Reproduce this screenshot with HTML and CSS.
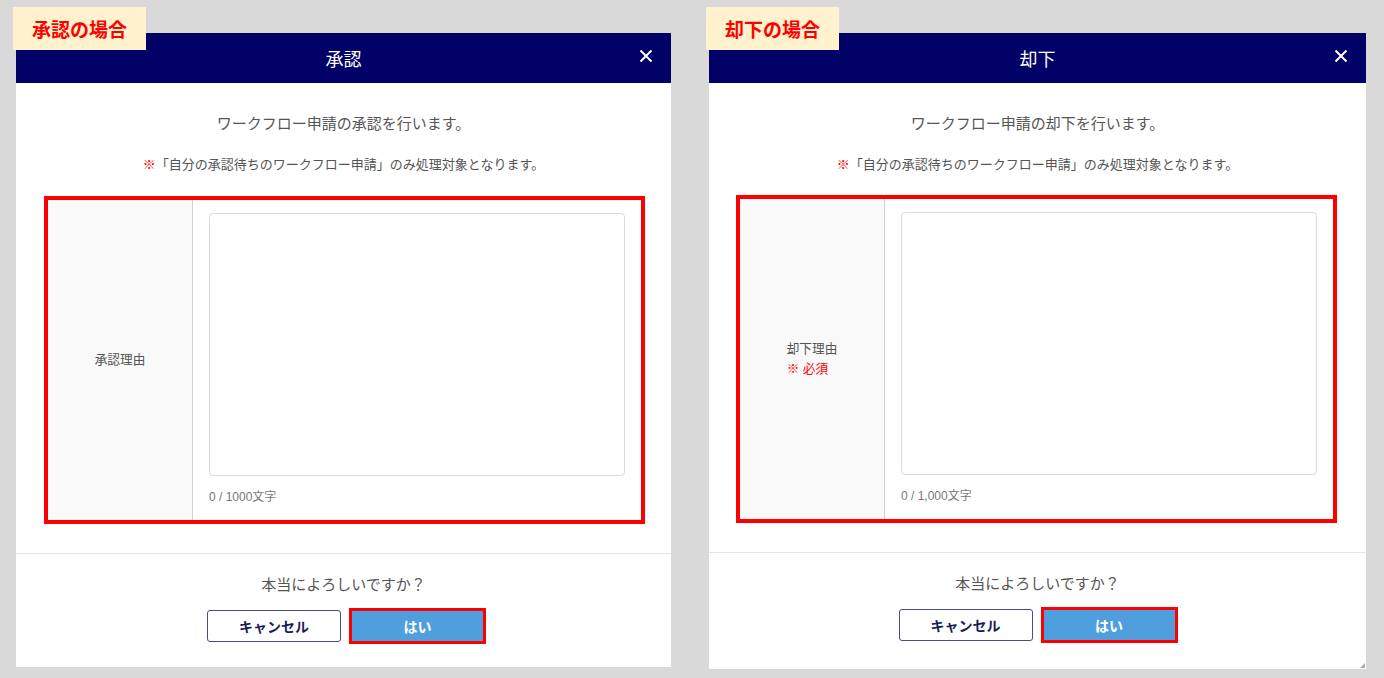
FILE: index.html
```html
<!doctype html>
<html lang="ja">
  <head>
    <meta charset="UTF-8" />
    <meta name="viewport" content="width=device-width, initial-scale=1.0" />
    <title>承認・却下ダイアログ</title>
    <link rel="stylesheet" href="styles.css">
  </head>
  <body>
    <div class="page">
      <!-- 承認 -->
      <div class="dialog">
        <div class="case-label">承認の場合</div>
        <div class="dialog-header">
          <span class="dialog-title">承認</span>
          <button class="close-btn" aria-label="閉じる">
            <svg width="14" height="14" viewBox="0 0 14 14">
              <path d="M1.5 1.5 L12.5 12.5 M12.5 1.5 L1.5 12.5" stroke="#fff" stroke-width="2" />
            </svg>
          </button>
        </div>
        <div class="dialog-body">
          <p class="message">ワークフロー申請の承認を行います。</p>
          <p class="note"><span class="mark">※</span>「自分の承認待ちのワークフロー申請」のみ処理対象となります。</p>
          <div class="form-box">
            <div class="form-label">
              <div class="label-text">承認理由</div>
            </div>
            <div class="form-field">
              <textarea class="reason"></textarea>
              <div class="counter">0 / 1000文字</div>
            </div>
          </div>
        </div>
        <div class="dialog-footer">
          <p class="confirm">本当によろしいですか？</p>
          <div class="actions">
            <button class="btn btn-cancel">キャンセル</button>
            <button class="btn btn-ok">はい</button>
          </div>
        </div>
      </div>

      <!-- 却下 -->
      <div class="dialog dialog-reject">
        <div class="case-label">却下の場合</div>
        <div class="dialog-header">
          <span class="dialog-title">却下</span>
          <button class="close-btn" aria-label="閉じる">
            <svg width="14" height="14" viewBox="0 0 14 14">
              <path d="M1.5 1.5 L12.5 12.5 M12.5 1.5 L1.5 12.5" stroke="#fff" stroke-width="2" />
            </svg>
          </button>
        </div>
        <div class="dialog-body">
          <p class="message">ワークフロー申請の却下を行います。</p>
          <p class="note"><span class="mark">※</span>「自分の承認待ちのワークフロー申請」のみ処理対象となります。</p>
          <div class="form-box">
            <div class="form-label">
              <div class="label-text">
                却下理由
                <div class="required">※ 必須</div>
              </div>
            </div>
            <div class="form-field">
              <textarea class="reason"></textarea>
              <div class="counter">0 / 1,000文字</div>
            </div>
          </div>
        </div>
        <div class="dialog-footer">
          <p class="confirm">本当によろしいですか？</p>
          <div class="actions">
            <button class="btn btn-cancel">キャンセル</button>
            <button class="btn btn-ok">はい</button>
          </div>
        </div>
      </div>
    </div>
  </body>
</html>
```

FILE: styles.css
```css
body {
  margin: 0;
  background-color: #d9d9d9;
  font-family: "Liberation Sans", "Noto Sans CJK JP", sans-serif;
  color: #555;
}

.page {
  display: flex;
  align-items: flex-start;
  gap: 38px;
  padding: 33px 0 0 16px;
}

.dialog {
  position: relative;
  width: 655px;
  background-color: white;
}

.dialog-reject {
  width: 657px;
}

.case-label {
  position: absolute;
  top: -26px;
  left: -3px;
  width: 133px;
  height: 43px;
  display: flex;
  align-items: center;
  justify-content: center;
  background-color: #fff2cc;
  color: #ff0000;
  font-size: 19px;
  font-weight: bold;
  z-index: 2;
}

.dialog-header {
  position: relative;
  height: 50px;
  background-color: #000066;
  display: flex;
  align-items: center;
  justify-content: center;
}

.dialog-title {
  color: white;
  font-size: 18px;
}

.close-btn {
  position: absolute;
  right: 18px;
  top: 16px;
  padding: 0;
  border: none;
  background: none;
  width: 14px;
  height: 14px;
  cursor: pointer;
}

.close-btn svg {
  display: block;
}

.dialog-body {
  padding: 30px 0 29px;
}

.message {
  margin: 0;
  text-align: center;
  font-size: 15px;
  line-height: 22px;
}

.note {
  margin: 20px 0 0;
  text-align: center;
  font-size: 13px;
  line-height: 20px;
}

.mark {
  color: #ff0000;
}

.form-box {
  display: flex;
  margin: 21px 26px 0 28px;
  border: 4px solid #ff0000;
}

.dialog-reject .form-box {
  margin: 20px 29px 0 27px;
}

.form-label {
  width: 144px;
  flex-shrink: 0;
  background-color: #f9f9f9;
  border-right: 1px solid #cfcfcf;
  display: flex;
  align-items: center;
  justify-content: center;
}

.label-text {
  font-size: 12.7px;
  line-height: 20px;
}

.required {
  color: #ff0000;
}

.form-field {
  flex: 1;
  padding: 13px 16px 14px;
}

.reason {
  display: block;
  box-sizing: border-box;
  width: 100%;
  height: 263px;
  border: 1px solid #dcdcdc;
  border-radius: 4px;
  resize: none;
}

.counter {
  margin-top: 12px;
  font-size: 12px;
  line-height: 18px;
  color: #777;
}

.dialog-footer {
  border-top: 1px solid #e5e5e5;
  padding: 20px 0 23px;
  text-align: center;
}

.dialog-reject .dialog-footer {
  padding-bottom: 26px;
}

.dialog-reject::after {
  content: "";
  position: absolute;
  right: 1px;
  bottom: 1px;
  border-style: solid;
  border-width: 0 0 5px 5px;
  border-color: transparent transparent #aaa transparent;
}

.confirm {
  margin: 0;
  font-size: 15px;
  line-height: 22px;
}

.actions {
  display: flex;
  justify-content: center;
  align-items: center;
  gap: 8px;
  margin-top: 12px;
  padding-left: 6px;
}

.dialog-reject .actions {
  padding-left: 1px;
}

.btn {
  font-family: "Liberation Sans", "Noto Sans CJK JP", sans-serif;
  font-size: 14px;
  font-weight: bold;
  cursor: pointer;
}

.btn-cancel {
  width: 134px;
  height: 32px;
  border: 1px solid #4a4a8c;
  border-radius: 3px;
  background-color: white;
  color: #1c1c5c;
}

.btn-ok {
  width: 137px;
  height: 36px;
  border: 3px solid #ff0000;
  background-color: #4f9fdf;
  color: white;
}
```
